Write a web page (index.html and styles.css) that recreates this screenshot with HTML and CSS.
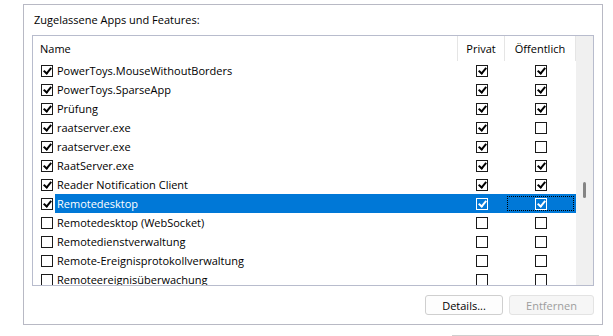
FILE: index.html
```html
<!DOCTYPE html>
<html lang="de">
<head>
    <meta charset="UTF-8">
    <title>Zugelassene Apps</title>
    <link rel="stylesheet" href="styles.css">
</head>
<body>
    <div class="frame">
        <div class="frame-title">Zugelassene Apps und Features:</div>

        <!-- App list -->
        <div class="list">
            <div class="list-main">
                <div class="list-head">
                    <div class="col-name head-cell">Name</div>
                    <div class="col-priv head-cell center">Privat</div>
                    <div class="col-pub head-cell center">Öffentlich</div>
                </div>
                <div class="list-body">
                    <div class="row">
                        <div class="col-name"><span class="cb on"></span><span class="label">PowerToys.MouseWithoutBorders</span></div>
                        <div class="col-priv center"><span class="cb on"></span></div>
                        <div class="col-pub center"><span class="cb on"></span></div>
                    </div>
                    <div class="row">
                        <div class="col-name"><span class="cb on"></span><span class="label">PowerToys.SparseApp</span></div>
                        <div class="col-priv center"><span class="cb on"></span></div>
                        <div class="col-pub center"><span class="cb on"></span></div>
                    </div>
                    <div class="row">
                        <div class="col-name"><span class="cb on"></span><span class="label">Prüfung</span></div>
                        <div class="col-priv center"><span class="cb on"></span></div>
                        <div class="col-pub center"><span class="cb on"></span></div>
                    </div>
                    <div class="row">
                        <div class="col-name"><span class="cb on"></span><span class="label">raatserver.exe</span></div>
                        <div class="col-priv center"><span class="cb on"></span></div>
                        <div class="col-pub center"><span class="cb"></span></div>
                    </div>
                    <div class="row">
                        <div class="col-name"><span class="cb on"></span><span class="label">raatserver.exe</span></div>
                        <div class="col-priv center"><span class="cb on"></span></div>
                        <div class="col-pub center"><span class="cb"></span></div>
                    </div>
                    <div class="row">
                        <div class="col-name"><span class="cb on"></span><span class="label">RaatServer.exe</span></div>
                        <div class="col-priv center"><span class="cb on"></span></div>
                        <div class="col-pub center"><span class="cb on"></span></div>
                    </div>
                    <div class="row">
                        <div class="col-name"><span class="cb on"></span><span class="label">Reader Notification Client</span></div>
                        <div class="col-priv center"><span class="cb on"></span></div>
                        <div class="col-pub center"><span class="cb on"></span></div>
                    </div>
                    <div class="row selected">
                        <div class="col-name"><span class="cb on"></span><span class="label">Remotedesktop</span></div>
                        <div class="col-priv center"><span class="cb on"></span></div>
                        <div class="col-pub center focus"><span class="cb on"></span></div>
                    </div>
                    <div class="row">
                        <div class="col-name"><span class="cb"></span><span class="label">Remotedesktop (WebSocket)</span></div>
                        <div class="col-priv center"><span class="cb"></span></div>
                        <div class="col-pub center"><span class="cb"></span></div>
                    </div>
                    <div class="row">
                        <div class="col-name"><span class="cb"></span><span class="label">Remotedienstverwaltung</span></div>
                        <div class="col-priv center"><span class="cb"></span></div>
                        <div class="col-pub center"><span class="cb"></span></div>
                    </div>
                    <div class="row">
                        <div class="col-name"><span class="cb"></span><span class="label">Remote-Ereignisprotokollverwaltung</span></div>
                        <div class="col-priv center"><span class="cb"></span></div>
                        <div class="col-pub center"><span class="cb"></span></div>
                    </div>
                    <div class="row">
                        <div class="col-name"><span class="cb"></span><span class="label">Remoteereignisüberwachung</span></div>
                        <div class="col-priv center"><span class="cb"></span></div>
                        <div class="col-pub center"><span class="cb"></span></div>
                    </div>
                </div>
            </div>
            <div class="scrollbar"><div class="thumb"></div></div>
        </div>

        <div class="actions">
            <button class="btn">Details...</button>
            <button class="btn" disabled>Entfernen</button>
        </div>
    </div>

    <!-- next button, cut off at the bottom -->
    <div class="next-btn"></div>
</body>
</html>
```

FILE: styles.css
```css
/* General */
body {
    margin: 0;
    background: #fff;
    color: #000;
    font-family: 'Open Sans', 'Noto Sans', sans-serif;
    font-size: 11px;
    overflow: hidden;
}

/* Group box */
.frame {
    box-sizing: border-box;
    width: 580px;
    height: 321px;
    margin: 4px 0 0 23px;
    border: 1px solid #b8b9c4;
    padding: 7px 8px 0 8px;
}
.frame-title {
    height: 16px;
    line-height: 16px;
    padding-left: 2px;
    margin-bottom: 7px;
}

/* List view */
.list {
    box-sizing: border-box;
    height: 251px;
    border: 1px solid #b8bccd;
    display: flex;
    overflow: hidden;
}
.list-main {
    width: 543px;
    display: flex;
    flex-direction: column;
}
.list-head {
    display: flex;
    height: 25px;
    flex-shrink: 0;
}
.head-cell {
    box-sizing: border-box;
    line-height: 25px;
    border-right: 1px solid #e5e5e5;
}
.head-cell.col-name {
    padding-left: 7px;
}
.col-name { width: 425px; }
.col-priv { width: 47px; }
.col-pub  { width: 71px; }
.center { text-align: center; }

.row {
    display: flex;
    height: 19px;
    flex-shrink: 0;
}
.row > div {
    box-sizing: border-box;
    display: flex;
    align-items: center;
    height: 19px;
}
.row .center { justify-content: center; }
.row .col-name { padding-left: 8px; }
.row .col-priv { padding-left: 1px; }
.label {
    flex: 1;
    height: 19px;
    line-height: 19px;
    margin-left: 2px;
    padding-left: 2px;
}

/* Selected row */
.row.selected .label,
.row.selected .col-priv,
.row.selected .col-pub {
    background: #0078d7;
    color: #fff;
}
.row .focus {
    outline: 1px dotted #000;
    outline-offset: -3px;
}

/* Checkbox */
.cb {
    box-sizing: border-box;
    width: 12px;
    height: 12px;
    border: 1px solid #1a1a1a;
    background: #fff;
    display: inline-block;
    position: relative;
}
.cb.on::after {
    content: "";
    position: absolute;
    left: 3px;
    top: 0px;
    width: 3px;
    height: 6px;
    border-right: 2px solid #000;
    border-bottom: 2px solid #000;
    transform: rotate(40deg);
}
.row.selected .col-priv .cb,
.row.selected .col-pub .cb {
    border-color: #fff;
    background: #0078d7;
}
.row.selected .col-priv .cb::after,
.row.selected .col-pub .cb::after {
    border-color: #fff;
}

/* Scrollbar */
.scrollbar {
    width: 17px;
    background: #f0f0f0;
}
.thumb {
    width: 3px;
    height: 16px;
    margin: 146px 0 0 7px;
    background: #858585;
    border-radius: 2px;
}

/* Buttons */
.actions {
    display: flex;
    justify-content: flex-end;
    gap: 6px;
    margin-top: 9px;
}
.btn {
    box-sizing: border-box;
    height: 20px;
    padding: 0;
    font-family: inherit;
    font-size: 11px;
    background: #fdfdfd;
    border: 1px solid #cfcfcf;
    border-radius: 3px;
    color: #000;
}
.btn:first-child { width: 78px; }
.btn:disabled {
    width: 85px;
    color: #9d9d9d;
    background: #f6f6f6;
    border-color: #e3e3e3;
}

/* top edge of the next button */
.next-btn {
    width: 147px;
    height: 0;
    margin: 10px 0 0 452px;
    border-top: 1px solid #cfcfcf;
}
```
